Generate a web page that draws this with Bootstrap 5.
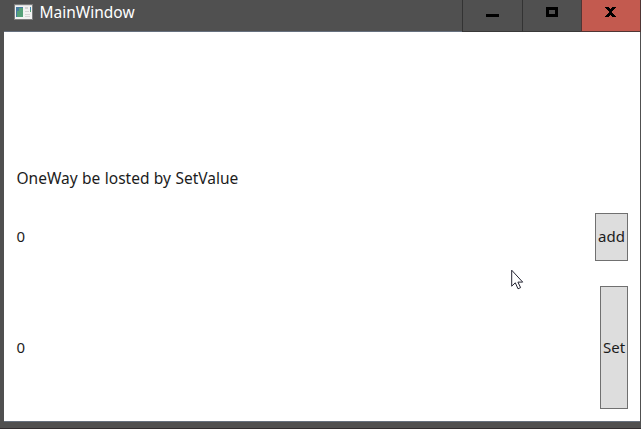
<!DOCTYPE html>
<html lang="en">
<head>
<meta charset="utf-8">
<meta name="viewport" content="width=device-width, initial-scale=1">
<title>MainWindow</title>
<link href="https://cdn.jsdelivr.net/npm/bootstrap@5.3.0/dist/css/bootstrap.min.css" rel="stylesheet">
<style>
body{width:641px;height:429px;font-family:"Noto Sans","Open Sans",sans-serif;font-size:15.5px;line-height:20px;color:#1c1c1c}
.window{width:641px;height:429px;background:#505050;border-bottom:1px solid #302c2f}
.titlebar{height:31px;padding-left:14px}
.app-icon{margin-top:4px}
.caption{margin:2px 0 0 6.5px;color:#fff;font-size:15.5px;line-height:21px}
.win-btn{width:60px;height:32px;border:0;border-left:1px solid #333;border-bottom:1px solid #393939;background:#505050;padding:0}
.win-btn svg{display:block}
.win-max{width:59px}
.win-close{width:60px;background:#c35a4f;border-color:#503534;border-right:1px solid #503534}
.client{margin:0 1px 0 4px;height:391px;border-top:1px solid #66707e;border-bottom:1px solid #66707e;background:#fff;padding:136px 12px 12px 12px}
.label-text{word-spacing:.4px;padding-left:.5px}
.row-add{height:48px;margin-top:25px}
.row-set{height:123px;margin-top:25px}
.row-add span,.row-set span{padding:0 0 2px .5px;font-size:15px}
.wpf-btn{border:1px solid #707070;background:#ddd;color:#1c1c1c;padding:0 0 2px;height:100%;white-space:nowrap;font-size:15px}
.btn-add{width:33px}
.btn-set{width:28px}
.pointer{left:511px;top:269px}
</style>
</head>
<body class="m-0 overflow-hidden">
<main class="window position-relative overflow-hidden">
  <header class="titlebar d-flex align-items-start">
    <svg class="app-icon" width="19" height="16" viewBox="0 0 19 16" shape-rendering="crispEdges" aria-hidden="true">
      <path fill="#7d7d7d" d="M0 0h19v16H0z"/><path fill="#f2f2f2" d="M1 1h17v14H1z"/><path fill="#dcdcdc" d="M1 1h17v1H1z"/>
      <path fill="#4779a5" d="M2 3h7v10H2z"/><path fill="#55a078" d="M3 6h6v7H3zM5 4h4v3H5z"/><path fill="#477ca0" d="M2 3h3v4H2z"/>
      <path fill="#d5d5d5" d="M11 3h3v2h-3zM11 7h4v1h-4zM11 10h5v1h-5zM11 12h5v1h-5z"/><path fill="#3e8cae" d="M16 3h1v3h-1z"/><path fill="#55a078" d="M16 6h1v2h-1z"/>
    </svg>
    <span class="caption">MainWindow</span>
    <div class="d-flex ms-auto">
      <button class="win-btn" aria-label="Minimize"><svg width="59" height="31"><path d="M23 14h13v3H23z"/></svg></button>
      <button class="win-btn win-max" aria-label="Maximize"><svg width="58" height="31"><path fill-rule="evenodd" d="M23 7h12v10H23zm3 3v4h6v-4z"/></svg></button>
      <button class="win-btn win-close" aria-label="Close"><svg width="58" height="31" shape-rendering="crispEdges"><path d="M23 7h4v1h1v1h1V8h1V7h4v1h-1v1h-1v1h-1v1h-1v2h1v1h1v1h1v1h1v1h-4v-1h-1v-1h-1v1h-1v1h-4v-1h1v-1h1v-1h1v-1h1v-2h-1v-1h-1V9h-1V8h-1z"/></svg></button>
    </div>
  </header>
  <section class="client d-flex flex-column">
    <div class="label-text">OneWay be losted by SetValue</div>
    <div class="row-add d-flex align-items-center justify-content-between"><span>0</span><button class="wpf-btn btn-add">add</button></div>
    <div class="row-set d-flex align-items-center justify-content-between"><span>0</span><button class="wpf-btn btn-set">Set</button></div>
  </section>
  <svg class="pointer position-absolute" width="14" height="22" viewBox="0 0 14 22" aria-hidden="true"><path fill="#fff" stroke="#242432" d="M.7 1.2v16l3.6-3.4 2.7 6 2.6-1.2-2.7-5.5h4.8z"/></svg>
</main>
<script src="https://cdn.jsdelivr.net/npm/bootstrap@5.3.0/dist/js/bootstrap.bundle.min.js"></script>
</body>
</html>
